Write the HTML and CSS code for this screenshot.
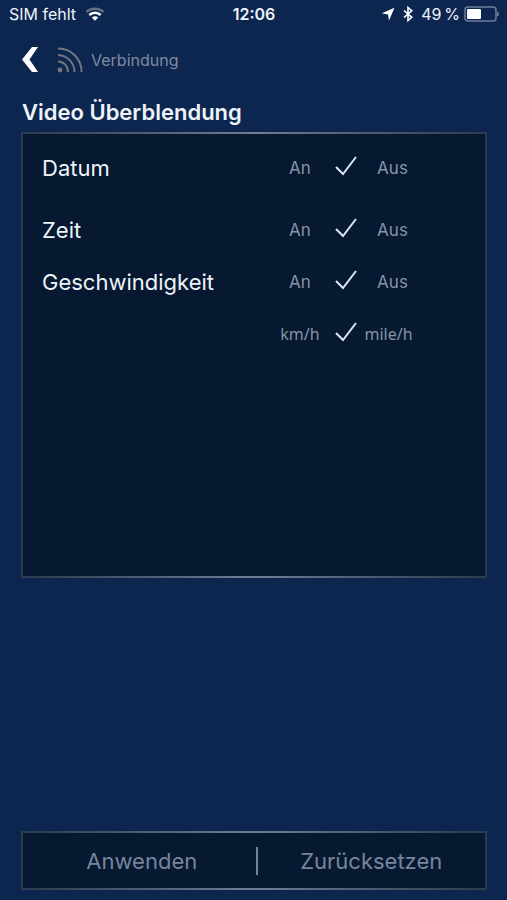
FILE: index.html
```html
<!DOCTYPE html>
<html lang="de">
<head>
    <meta charset="UTF-8">
    <meta name="viewport" content="width=device-width, initial-scale=1.0">
    <title>Video Überblendung</title>
    <link rel="stylesheet" href="styles.css">
</head>
<body>
    <div class="status-bar">
        <div class="status-left">
            <span>SIM fehlt</span>
            <svg class="wifi" width="20" height="14" viewBox="0 0 20 14" fill="none" stroke="#fff" stroke-width="2.400">
                <path d="M1.500 5C6 .6 14 .6 18.500 5" opacity=".35"/>
                <path d="M4.300 8C7.500 5 12.500 5 15.700 8"/>
                <path d="M10 13.700L6.800 10.500Q10 7.800 13.200 10.500Z" fill="#fff" stroke="none"/>
            </svg>
        </div>
        <span class="clock">12:06</span>
        <div class="status-right">
            <svg width="14" height="14" viewBox="0 0 14 14" fill="#fff">
                <path d="M13.500 .8L8 13.500L7 7.500L.8 6.300Z"/>
            </svg>
            <svg class="bluetooth" width="10" height="16" viewBox="0 0 10 16" fill="none" stroke="#fff" stroke-width="1.600">
                <path d="M1 4.500L8.800 11.300L5 14.500V1.500L8.800 4.700L1 11.500"/>
            </svg>
            <span class="battery-text">49&#8201;%</span>
            <svg width="35" height="16" viewBox="0 0 35 16">
                <rect x="1" y="1" width="31" height="14" rx="3" fill="none" stroke="#6b7d9a" stroke-width="1.500"/>
                <rect x="3" y="3" width="14" height="10" rx="1" fill="#fff"/>
                <path d="M33 5.500Q35 6 35 8T33 10.500Z" fill="#6b7d9a"/>
            </svg>
        </div>
    </div>

    <header class="nav">
        <button class="back-button" type="button" aria-label="Zurück">
            <svg width="18" height="26" viewBox="0 0 18 26" fill="#fff">
                <path d="M11 0H17L8.500 12.500L17 25H11L1 12.500Z"/>
            </svg>
        </button>
        <svg class="feed" width="26" height="26" viewBox="0 0 26 26" fill="none" stroke="#73767d" stroke-width="2">
            <circle cx="3" cy="23" r="2.400" fill="#73767d" stroke="none"/>
            <path d="M1 14.500A10 10 0 0 1 11 25M1 8A17 17 0 0 1 17.500 25M1 1.500A23 23 0 0 1 24.500 25"/>
        </svg>
        <span class="nav-title">Verbindung</span>
    </header>

    <main class="content">
        <h1>Video Überblendung</h1>
        <section class="panel">
            <div class="setting spaced">
                <label class="setting-name" for="datum">Datum</label>
                <span class="option">An</span>
                <span class="check">
                    <input type="checkbox" id="datum" checked>
                    <svg width="22" height="20" viewBox="0 0 22 20"><path d="M1 11L8 18L21 1"/></svg>
                </span>
                <span class="option">Aus</span>
            </div>
            <div class="setting">
                <label class="setting-name" for="zeit">Zeit</label>
                <span class="option">An</span>
                <span class="check">
                    <input type="checkbox" id="zeit" checked>
                    <svg width="22" height="20" viewBox="0 0 22 20"><path d="M1 11L8 18L21 1"/></svg>
                </span>
                <span class="option">Aus</span>
            </div>
            <div class="setting">
                <label class="setting-name" for="tempo">Geschwindigkeit</label>
                <span class="option">An</span>
                <span class="check">
                    <input type="checkbox" id="tempo" checked>
                    <svg width="22" height="20" viewBox="0 0 22 20"><path d="M1 11L8 18L21 1"/></svg>
                </span>
                <span class="option">Aus</span>
            </div>
            <div class="setting">
                <span></span>
                <span class="option unit">km/h</span>
                <span class="check">
                    <input type="checkbox" id="einheit" aria-labelledby="einheit-name" checked>
                    <svg width="22" height="20" viewBox="0 0 22 20"><path d="M1 11L8 18L21 1"/></svg>
                </span>
                <label class="option unit" id="einheit-name" for="einheit">mile/h</label>
            </div>
        </section>

        <div class="actions">
            <button type="button">Anwenden</button>
            <span class="divider"></span>
            <button type="button">Zurücksetzen</button>
        </div>
    </main>
</body>
</html>
```
FILE: styles.css
```css
* {
    box-sizing: border-box;
}

body {
    font-family: Inter, "Liberation Sans", sans-serif;
    background-color: #0c2650;
    color: #eef3fa;
    margin: 0;
    min-height: 100vh;
    display: flex;
    flex-direction: column;
}

button {
    font-family: inherit;
    background: none;
    border: none;
    padding: 0;
    cursor: pointer;
}

svg {
    display: block;
    flex: none;
}

.status-bar {
    display: grid;
    grid-template-columns: 1fr auto 1fr;
    align-items: center;
    height: 28px;
    padding: 0 8px 0 9px;
    font-size: 16px;
    line-height: 20px;
}

.status-left, .status-right {
    display: flex;
    align-items: center;
    gap: 9px;
    white-space: nowrap;
}

.status-right {
    justify-content: flex-end;
    gap: 4px;
}

.bluetooth {
    margin: 0 4px;
}

.clock {
    font-weight: 600;
}

.nav {
    display: flex;
    align-items: center;
    height: 64px;
    padding: 0 21px;
}

.back-button {
    margin-right: 18px;
}

.nav-title {
    margin-left: 8px;
    font-size: 16px;
    color: #7f8a9f;
}

.content {
    flex: 1;
    display: flex;
    flex-direction: column;
    padding: 4px 20px 10px 21px;
}

h1 {
    margin: 0 0 4px 1px;
    font-size: 22px;
    line-height: 32px;
    font-weight: 600;
}

.panel, .actions {
    background-color: #061931;
    border: 2px solid;
    border-image: linear-gradient(90deg, #2c3a50, #6f7e94 50%, #2c3a50) 2;
}

.panel {
    min-height: 446px;
    padding: 8px 60px 8px 19px;
}

.setting {
    display: grid;
    grid-template-columns: 1fr 64px 28px 65px;
    align-items: center;
    height: 52px;
}

.spaced {
    margin-bottom: 10px;
}

.setting-name {
    font-size: 22px;
}

.option {
    font-size: 17px;
    text-align: center;
    color: #8593a5;
}

.unit {
    font-family: "Noto Sans", sans-serif;
    font-size: 16px;
}

label.unit {
    padding-right: 8px;
}

.check {
    position: relative;
    display: flex;
    justify-content: center;
    padding-bottom: 4px;
}

.check input {
    position: absolute;
    inset: 0;
    width: 100%;
    height: 100%;
    margin: 0;
    opacity: 0;
    cursor: pointer;
}

.check path {
    fill: none;
    stroke: #dbe8fb;
    stroke-width: 2;
    opacity: 0;
}

.check input:checked + svg path {
    opacity: 1;
}

.actions {
    display: grid;
    grid-template-columns: 1fr 2px 1fr;
    align-items: center;
    height: 59px;
    margin-top: auto;
    padding-left: 5px;
}

.actions button {
    height: 100%;
    font-size: 22px;
    color: #76859c;
}

.divider {
    height: 28px;
    background-color: #76859b;
}
```
